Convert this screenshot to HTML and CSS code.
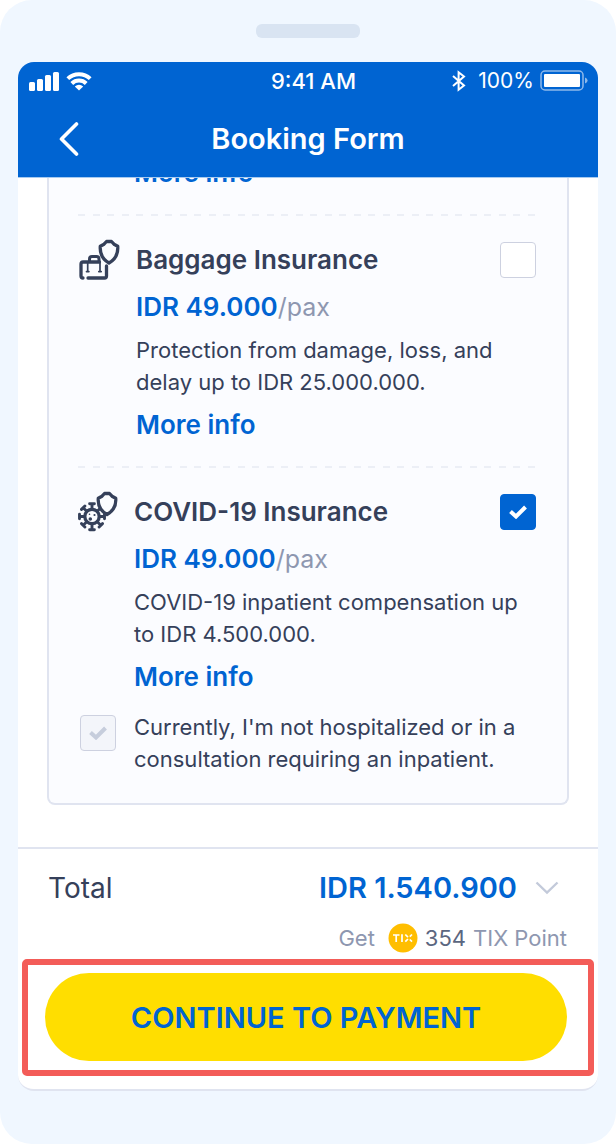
FILE: index.html
```html
<!DOCTYPE html>
<html lang="en">
<head>
    <meta charset="utf-8">
    <meta name="viewport" content="width=device-width">
    <title>Booking Form</title>
    <link rel="stylesheet" href="styles.css">
</head>
<body>
    <div class="device">
        <div class="speaker"></div>
        <div class="screen">
            <header>
                <div class="status">
                    <div class="status-left">
                        <svg width="31" height="19" viewBox="0 0 31 19" fill="#fff">
                            <rect x="0" y="10" width="6" height="9" rx="1.5"/>
                            <rect x="8" y="7" width="6" height="12" rx="1.5"/>
                            <rect x="16" y="3" width="6" height="16" rx="1.5"/>
                            <rect x="24" y="0" width="6" height="19" rx="1.5"/>
                        </svg>
                        <svg width="26" height="19" viewBox="0 0 26 19" fill="none" stroke="#fff" stroke-width="4">
                            <path d="M1.8 6.600A16.3 16.3 0 0 1 24.2 6.600"/>
                            <path d="M5.8 11.500A10.4 10.4 0 0 1 20.2 11.500"/>
                            <path d="M13 18.500L8.800 14.500Q13 11 17.200 14.500Z" fill="#fff" stroke="none"/>
                        </svg>
                    </div>
                    <div class="clock">9:41 AM</div>
                    <div class="status-right">
                        <svg width="14" height="22" viewBox="0 0 14 22" fill="none" stroke="#fff" stroke-width="2">
                            <path d="M1 6l11 9.500-5.400 4.200V2.300L12 6.500 1 16"/>
                        </svg>
                        <span>100%</span>
                        <svg width="48" height="22" viewBox="0 0 48 22">
                            <rect x="1" y="1" width="42" height="19" rx="4" fill="none" stroke="#8fb9ea" stroke-width="1.5"/>
                            <rect x="4" y="4" width="36" height="13" rx="1" fill="#fff"/>
                            <path d="M45 7.5Q47.6 8.5 47.6 10.5T45 13.5Z" fill="#8fb9ea"/>
                        </svg>
                    </div>
                </div>
                <div class="nav">
                    <button type="button" class="back" aria-label="Back">
                        <svg width="20" height="34" viewBox="0 0 20 34" fill="none" stroke="#fff" stroke-width="3.6" stroke-linecap="round" stroke-linejoin="round">
                            <path d="M17.500 2L2.500 17 17.500 32"/>
                        </svg>
                    </button>
                    <h1>Booking Form</h1>
                </div>
            </header>

            <main>
                <div class="card">
                    <div class="previous"><a href="#" class="more">More info</a></div>

                    <section class="item">
                        <svg class="icon" width="42" height="42" viewBox="0 0 42 42" fill="none" stroke="#35405a" stroke-width="3.300" stroke-linecap="round" stroke-linejoin="round">
                            <path d="M28.500 3.500H33.500L36 6.200L39.700 8.200C40.300 15.500 37.200 21.500 31 25C24.800 21.500 21.700 15.500 22.300 8.200L26 6.200Z"/>
                            <path d="M21.500 24H5Q3 24 3 26V38Q3 40 5 40M10 40H26.500Q28.500 40 28.500 38V28"/>
                            <path d="M11.500 23V21Q11.500 18.500 14 18.500H18.500Q21 18.500 21 21V23" stroke-width="3"/>
                            <path d="M9.700 25V33.500M22 25V33.500M8.500 33.600H10.900M20.800 33.600H23.200" stroke-width="1.700"/>
                        </svg>
                        <label for="baggage" class="name">Baggage Insurance</label>
                        <input type="checkbox" id="baggage">
                        <div class="details">
                            <div class="price"><b>IDR 49.000</b>/pax</div>
                            <p>Protection from damage, loss, and<br>delay up to IDR 25.000.000.</p>
                            <a href="#" class="more">More info</a>
                        </div>
                    </section>

                    <section class="item">
                        <svg class="icon" width="40" height="42" viewBox="0 0 40 42" fill="none" stroke="#35405a" stroke-width="3.300" stroke-linecap="round" stroke-linejoin="round">
                            <circle cx="14" cy="26.500" r="7.200"/>
                            <path d="M14 18.500V14M11.600 13.800H16.400M14 34.500V39M11.600 39.700H16.400M6.500 26.500H2M1.500 24.300V28.700M21.500 26.500H26M26.500 24.300V28.700M8.500 21L5.200 17.700M3.500 19.400L6.900 16M8.500 32L5.200 35.300M3.500 33.600L6.900 37M19.500 32L22.800 35.300M21.100 37L24.500 33.600M19.500 21L21.500 19" stroke-width="2.900"/>
                            <circle cx="12.300" cy="29" r="1.800" fill="#35405a" stroke="none"/>
                            <circle cx="16.500" cy="25" r="1.100" fill="#35405a" stroke="none"/>
                            <circle cx="11.500" cy="24.300" r=".8" fill="#35405a" stroke="none"/>
                            <path fill="#fbfcff" d="M26.500 3.500H31.500L34 6.200L37.700 8.200C38.300 15 35.200 21 29 24.500C22.800 21 19.700 15 20.300 8.200L24 6.200Z"/>
                        </svg>
                        <label for="covid" class="name">COVID-19 Insurance</label>
                        <input type="checkbox" id="covid" checked>
                        <div class="details">
                            <div class="price"><b>IDR 49.000</b>/pax</div>
                            <p>COVID-19 inpatient compensation up<br>to IDR 4.500.000.</p>
                            <a href="#" class="more">More info</a>
                        </div>
                    </section>

                    <div class="consent">
                        <input type="checkbox" id="consent" checked disabled>
                        <label for="consent">Currently, I'm not hospitalized or in a<br>consultation requiring an inpatient.</label>
                    </div>
                </div>
            </main>

            <footer>
                <div class="total">
                    <span>Total</span>
                    <button type="button" class="amount">
                        IDR 1.540.900
                        <svg width="24" height="14" viewBox="0 0 24 14" fill="none" stroke="#c3cada" stroke-width="2.4">
                            <path d="M1.500 1.500L12 11.500 22.500 1.500"/>
                        </svg>
                    </button>
                </div>
                <div class="points">
                    Get
                    <svg width="30" height="30" viewBox="0 0 30 30">
                        <circle cx="15" cy="15" r="14.500" fill="#ffbe00"/>
                        <g fill="none" stroke="#fff" stroke-width="1.700">
                            <path d="M5 12H11.500M8.200 12V19M14 11.200V19M17.300 11.500L20 14.200M17.300 18.700L20 16M24 11.500L21.800 13.700M24 18.700L21.800 16.500"/>
                        </g>
                    </svg>
                    <b>354</b> TIX Point
                </div>
                <div class="highlight">
                    <button type="submit" class="pay">CONTINUE TO PAYMENT</button>
                </div>
            </footer>
        </div>
    </div>
</body>
</html>
```
FILE: styles.css
```css
* {box-sizing: border-box}
body {
    margin: 0;
    background: #fff;
    color: #35405a;
    font-family: Inter, "Liberation Sans", sans-serif;
    font-size: 22px;
    line-height: 32px;
}
h1, p {margin: 0}
a {color: #0064d2; text-decoration: none}
svg {display: block; flex: none}
button {
    border: 0;
    padding: 0;
    background: none;
    font-family: inherit;
    cursor: pointer;
}
.device {
    min-height: 100vh;
    padding: 24px 18px 53px;
    background: #f0f7ff;
    border-radius: 32px;
}
.speaker {
    width: 104px;
    height: 14px;
    margin: 0 auto 24px;
    border-radius: 6px;
    background: #d9e4f2;
}
.screen {
    overflow: hidden;
    background: #fff;
    border-bottom: 2px solid #e0e4f0;
    border-radius: 16px;
}

header {
    background: #0064d2;
    color: #fff;
    border-bottom: 1px solid #a6caf0;
}
.status {
    display: grid;
    grid-template-columns: 1fr auto 1fr;
    align-items: center;
    height: 38px;
    padding: 0 10px 0 11px;
}
.status-left, .status-right {
    display: flex;
    align-items: center;
    gap: 6px;
}
.status-right {justify-content: flex-end; font-size: 21px}
.status-right span {margin-left: 6px}
.clock {padding-left: 10px; font-weight: 500}
.nav {
    display: grid;
    grid-template-columns: 62px 1fr 62px;
    align-items: center;
    height: 77px;
    padding: 0 20px;
}
.back {justify-self: center}
h1 {
    font-size: 29px;
    font-weight: 600;
    line-height: 36px;
    text-align: center;
}

main {
    overflow: hidden;
    padding: 0 29px 42px;
}
.card {
    margin-top: -23px;
    padding: 0 31px 28px 29px;
    background: #fbfcff;
    border: 2px solid #e0e4f0;
    border-top: 0;
    border-radius: 0 0 8px 8px;
}
.previous {padding: 0 0 23px 56px}
.item {
    display: grid;
    grid-template-columns: auto 1fr auto;
    column-gap: 16px;
    padding: 28px 0 23px;
    background: repeating-linear-gradient(90deg, #eceff6 0 7px, transparent 7px 15px, #eceff6 15px 22px, transparent 22px 29px) top / 100% 2px no-repeat;
}
.icon {margin-top: -4px; margin-bottom: -2px}
.name {
    font-size: 26px;
    font-weight: 600;
    line-height: 36px;
}
.details {grid-column: 2 / 4}
.price {
    margin: 11px 0 9px;
    color: #8e97b0;
    font-size: 25px;
    line-height: 36px;
}
.price b {color: #0064d2; font-size: 26px; font-weight: 600}
.more {
    display: block;
    margin-top: 9px;
    font-size: 26px;
    font-weight: 600;
    line-height: 36px;
}
.previous .more {margin-top: 0}

input[type=checkbox] {
    appearance: none;
    flex: none;
    width: 36px;
    height: 36px;
    margin: 0;
    border: 1px solid #cdd1e0;
    border-radius: 4px;
    background: #fff center no-repeat;
}
input[type=checkbox]:checked {
    border-color: #0064d2;
    background-color: #0064d2;
    background-image: url("data:image/svg+xml,%3Csvg xmlns='http://www.w3.org/2000/svg' width='18' height='14' fill='none' stroke='%23fff' stroke-width='4'%3E%3Cpath d='M1.500 6.500L7 11.500 16.500 2'/%3E%3C/svg%3E");
}
input[type=checkbox]:disabled {
    border-color: #cdd1e0;
    background-color: #f3f5fa;
    background-image: url("data:image/svg+xml,%3Csvg xmlns='http://www.w3.org/2000/svg' width='18' height='14' fill='none' stroke='%23c6cddc' stroke-width='4'%3E%3Cpath d='M1.500 6.500L7 11.500 16.500 2'/%3E%3C/svg%3E");
}
.consent {
    display: flex;
    align-items: center;
    gap: 18px;
    margin-top: -7px;
    padding-left: 2px;
}
.consent input[type=checkbox] {margin-bottom: 20px}

footer {
    padding: 21px 4px 13px;
    border-top: 2px solid #e0e4f0;
}
.total {
    display: flex;
    justify-content: space-between;
    padding: 0 35px 0 26px;
    font-size: 28px;
    line-height: 36px;
}
.amount {
    display: flex;
    align-items: center;
    gap: 18px;
    color: #0064d2;
    font-size: 29px;
    font-weight: 600;
    line-height: 36px;
}
.points {
    display: flex;
    justify-content: flex-end;
    align-items: center;
    gap: 7px;
    margin: 17px 0 6px;
    padding-right: 27px;
    color: #8e97b0;
    line-height: 30px;
}
.points svg {margin-left: 6px}
.points b {color: #5b6680; font-weight: 400}
.highlight {
    padding: 8px 21px 9px 17px;
    border: 6px solid #f35c58;
    border-radius: 5px;
}
.pay {
    display: block;
    width: 100%;
    height: 88px;
    border-radius: 44px;
    background: #ffde00;
    color: #0064d2;
    font-size: 29px;
    font-weight: 600;
}
```
